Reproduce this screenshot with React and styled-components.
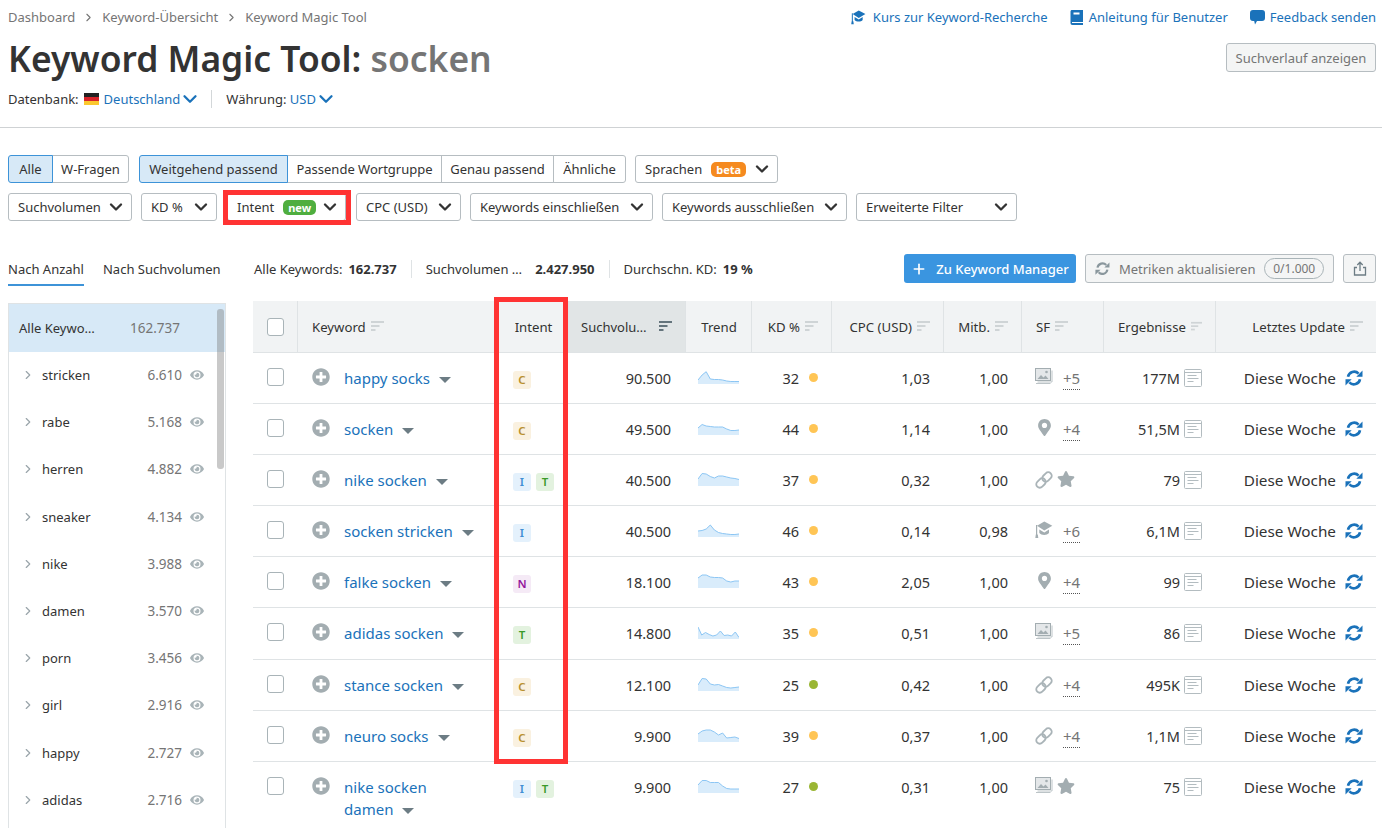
import React from 'react';
import styled, { createGlobalStyle } from 'styled-components';
import { FaMapMarkerAlt, FaStar, FaPlusCircle, FaEye } from 'react-icons/fa';
import { ChevronDown, ChevronRight, Plus } from 'lucide-react';

const GlobalStyle = createGlobalStyle`
  html, body { margin: 0; height: 100%; overflow: hidden; background: #fff; }
  body { font-family: "Noto Sans", "Open Sans", sans-serif; color: #333; font-size: 13px; }
  * { box-sizing: border-box; }
`;

const Page = styled.div`
  height: 828px;
  overflow: hidden;
`;

const Section = styled.div`
  padding: 0 6px 0 8px;
`;

const TopBar = styled.div`
  height: 34px;
  display: flex;
  align-items: center;
  justify-content: space-between;
`;

const Crumbs = styled.div`
  display: flex;
  align-items: center;
  gap: 7px;
  color: #757575;
  font-size: 13px;
`;

const HelpLinks = styled.div`
  display: flex;
  gap: 22px;
`;

const HelpLink = styled.a`
  display: flex;
  align-items: center;
  gap: ${(p) => p.$gap || 5}px;
  color: #1a72ba;
  font-size: 13px;
`;

const TitleRow = styled.div`
  display: flex;
  justify-content: space-between;
  height: 50px;
`;

const Title = styled.h1`
  margin: 0;
  font-size: 35.4px;
  line-height: 48px;
  font-weight: 600;
  color: #333;
  span { color: #757575; }
`;

const HistoryButton = styled.button`
  margin-top: 9px;
  width: 150px;
  height: 29px;
  background: #f4f5f5;
  border: 1px solid #b6bdc1;
  border-radius: 3px;
  color: #757575;
  font: inherit;
`;

const MetaRow = styled.div`
  margin-top: 5px;
  height: 20px;
  display: flex;
  align-items: center;
`;

const MetaLink = styled.span`
  display: inline-flex;
  align-items: center;
  color: #1a72ba;
  svg { margin: 0 -5px 0 -1px; }
`;

const Flag = styled.span`
  width: 15px;
  height: 12px;
  margin: 0 5px;
  background: linear-gradient(#222 33%, #d8232a 33% 66%, #fbc82e 66%);
`;

const MetaDivider = styled.span`
  width: 1px;
  height: 18px;
  background: #d3d7d9;
  margin: 0 14px 0 15px;
`;

const Rule = styled.hr`
  margin: 18px 0 0;
  border: 0;
  border-top: 1px solid #cfd2d4;
`;

const FilterArea = styled.div`
  margin-top: 27px;
  display: flex;
  flex-direction: column;
  gap: 10px;
`;

const FilterRow = styled.div`
  display: flex;
  gap: ${(p) => p.$gap || 9}px;
`;

const Segments = styled.div`
  display: flex;
`;

const Segment = styled.button`
  width: ${(p) => p.$w}px;
  height: 28px;
  padding: 0;
  font: inherit;
  color: #333;
  margin-left: -1px;
  background: ${(p) => (p.$active ? '#d7e9f7' : '#fff')};
  border: 1px solid ${(p) => (p.$active ? '#3d93d8' : '#b6bdc1')};
  position: relative;
  z-index: ${(p) => (p.$active ? 1 : 0)};
  &:first-child { margin-left: 0; border-radius: 3px 0 0 3px; }
  &:last-child { border-radius: 0 3px 3px 0; }
`;

const Select = styled.button`
  position: relative;
  width: ${(p) => p.$w}px;
  margin-left: ${(p) => p.$ml || 0}px;
  height: 28px;
  padding: 0 5px 0 9px;
  display: flex;
  align-items: center;
  justify-content: space-between;
  background: #fff;
  border: 1px solid #b6bdc1;
  border-radius: 3px;
  font: inherit;
  color: #333;
  white-space: nowrap;
`;

const SelectLabel = styled.span`
  display: flex;
  align-items: center;
  gap: 9px;
`;

const Pill = styled.span`
  height: 15px;
  padding: 0 5px;
  border-radius: 5px;
  background: ${(p) => p.$bg};
  color: #fff;
  font-size: 11px;
  font-weight: 700;
  line-height: 15px;
`;

const RedFrame = styled.span`
  position: absolute;
  top: -4px;
  bottom: -5px;
  left: -5px;
  right: -6px;
  border: 5px solid #ff3333;
  pointer-events: none;
`;

const Content = styled.div`
  margin-top: 33px;
  display: grid;
  grid-template-columns: 218px 1123px;
  column-gap: 27px;
`;

const Tabs = styled.div`
  display: flex;
  gap: 19px;
  height: 32px;
  margin-bottom: 17px;
  align-items: flex-start;
  padding-top: 5px;
`;

const Tab = styled.div`
  height: 27px;
  line-height: 20px;
  white-space: nowrap;
  border-bottom: 2px solid ${(p) => (p.$active ? '#3d93d8' : 'transparent')};
`;

const Sidebar = styled.div`
  position: relative;
  border: 1px solid #dfe3e5;
  border-bottom: 0;
  height: 525px;
  overflow: hidden;
`;

const SideActive = styled.div`
  height: 47.5px;
  background: #d7e9f7;
  display: flex;
  align-items: center;
  padding-left: 10px;
`;

const SideActiveLabel = styled.span`
  width: 111px;
`;

const SideCount = styled.span`
  color: #757575;
  font-size: 13.5px;
`;

const SideRow = styled.div`
  height: 47.2px;
  display: flex;
  align-items: center;
`;

const SideChevron = styled.span`
  width: 33px;
  padding-left: 12px;
  display: flex;
  color: #9aa5aa;
`;

const SideName = styled.span`
  flex: 1;
  color: #333;
`;

const SideEye = styled.span`
  width: 43px;
  display: flex;
  padding-left: 8px;
  color: #a9b4b8;
`;

const ScrollThumb = styled.div`
  position: absolute;
  top: 5px;
  right: 1px;
  width: 7px;
  height: 160px;
  border-radius: 3px;
  background: rgba(120, 120, 120, 0.4);
`;

const StatsBar = styled.div`
  height: 29px;
  margin-bottom: 18px;
  display: flex;
  align-items: center;
`;

const Stat = styled.span`
  display: flex;
  gap: ${(p) => p.$gap || 6}px;
  padding: 0 14px 0 ${(p) => (p.$first ? 1 : 14)}px;
  border-left: ${(p) => (p.$first ? '0' : '1px solid #dfe3e5')};
  line-height: 18px;
  b { font-weight: 700; }
`;

const StatActions = styled.div`
  margin-left: auto;
  display: flex;
  gap: 9px;
`;

const PrimaryButton = styled.button`
  width: 172px;
  height: 29px;
  display: flex;
  align-items: center;
  justify-content: center;
  gap: 9px;
  border: 0;
  border-radius: 3px;
  background: #3a95e0;
  color: #fff;
  font: inherit;
  font-weight: 500;
`;

const GhostButton = styled.button`
  width: ${(p) => p.$w}px;
  height: 29px;
  display: flex;
  align-items: center;
  justify-content: ${(p) => (p.$center ? 'center' : 'flex-start')};
  gap: 9px;
  padding: 0 ${(p) => (p.$center ? 0 : 9)}px;
  background: #f4f5f5;
  border: 1px solid #b6bdc1;
  border-radius: 3px;
  color: #757575;
  font: inherit;
  white-space: nowrap;
`;

const Quota = styled.span`
  margin-left: auto;
  width: 60px;
  height: 21px;
  border: 1px solid #a9b4b8;
  border-radius: 11px;
  font-size: 12px;
  line-height: 19px;
  text-align: center;
`;

const Table = styled.div`
  position: relative;
`;

const columns = '44px 200px 71px 117px 66px 80px 112px 78px 82px 112px 161px';

const HeadRow = styled.div`
  display: grid;
  grid-template-columns: ${columns};
  height: 52px;
  background: #f1f3f4;
  border-bottom: 1px solid #dfe3e5;
`;

const HeadCell = styled.div`
  display: flex;
  align-items: center;
  justify-content: ${(p) => (p.$sorted ? 'space-between' : p.$justify || 'flex-end')};
  gap: 5px;
  padding: 0 13px 0 ${(p) => (p.$sorted ? 12 : 14)}px;
  font-size: ${(p) => (p.$sorted ? 13 : 13.2)}px;
  white-space: nowrap;
  background: ${(p) => (p.$sorted ? '#e1e5e6' : 'transparent')};
  border-left: ${(p) => (p.$first ? '0' : '1px solid #dfe3e5')};
`;

const Row = styled.div`
  display: grid;
  grid-template-columns: ${columns};
  min-height: 51.1px;
  border-bottom: 1px solid #dfe3e5;
  &:last-child { border-bottom: 0; }
`;

const Cell = styled.div`
  display: flex;
  align-items: flex-start;
  justify-content: ${(p) => p.$justify || 'flex-end'};
  gap: ${(p) => p.$gap || 0}px;
  padding: ${(p) => p.$top || 14}px ${(p) => (p.$right === undefined ? 13 : p.$right)}px 0 ${(p) => p.$left || 0}px;
  font-size: 14.5px;
  line-height: 22px;
  white-space: nowrap;
`;

const UpdateText = styled.span`
  font-size: 15.3px;
`;

const Checkbox = styled.span`
  display: block;
  width: 18px;
  height: 18px;
  background: #fff;
  border: 1px solid #a9b4b8;
  border-radius: 3px;
`;

const KeywordText = styled.a`
  max-width: 135px;
  color: #1a72ba;
  font-size: 15px;
  white-space: normal;
`;

const LastWord = styled.span`
  white-space: nowrap;
`;

const Caret = styled.i`
  display: inline-block;
  margin-left: 9px;
  vertical-align: 1px;
  border-left: 6px solid transparent;
  border-right: 6px solid transparent;
  border-top: 6px solid #6c7c84;
`;

const PlusHolder = styled.span`
  display: flex;
  color: #a3adb1;
  margin: 1px 14px 0 0;
`;

const Badges = styled.div`
  display: flex;
  gap: 5px;
  padding-top: 4px;
`;

const intentColors = {
  C: ['#faf1e0', '#b8902f'],
  I: ['#e4f1fc', '#3f8fd4'],
  T: ['#e3f2df', '#3a9a2a'],
  N: ['#f5eaf6', '#94169c'],
};

const Badge = styled.span`
  width: 18px;
  height: 18px;
  border-radius: 3px;
  text-align: center;
  font-size: 11.5px;
  font-weight: 600;
  line-height: 18px;
  background: ${(p) => intentColors[p.$kind][0]};
  color: ${(p) => intentColors[p.$kind][1]};
`;

const Dot = styled.span`
  width: 9px;
  height: 9px;
  margin: 6px 0 0 10px;
  border-radius: 50%;
  background: ${(p) => p.$color};
`;

const More = styled.span`
  margin-left: 10px;
  height: 22px;
  line-height: 21px;
  border-bottom: 1px dotted #555;
  color: #757575;
  font-size: 15px;
`;

const SfIcon = styled.span`
  display: flex;
  width: 18px;
  justify-content: center;
  margin-left: ${(p) => p.$ml || 0}px;
  margin-top: ${(p) => p.$mt || 0}px;
  color: #a3adb1;
`;

const RefreshHolder = styled.span`
  display: flex;
  margin-top: 3px;
`;

const RedColumn = styled.div`
  position: absolute;
  left: 241px;
  top: -4px;
  width: 74px;
  height: 467px;
  border: 5px solid #ff3333;
  pointer-events: none;
`;

const DocIcon = () => (
  <svg width="18" height="18" viewBox="0 0 18 18" fill="none" stroke="#b3bcc0">
    <rect x="0.5" y="0.5" width="17" height="17" rx="1" />
    <path d="M1 3.5h16" />
    <path d="M3.5 6.5h9M3.5 9.5h11M3.5 12.5h6" strokeWidth="1.2" />
  </svg>
);

const ImagesIcon = () => (
  <svg width="18" height="16" viewBox="0 0 18 16">
    <rect x="0.5" y="0.5" width="15" height="12" fill="#e4e7e9" stroke="#a3adb1" />
    <path d="M2.5 11l3.5-4 2.5 2.500 2-2 3 3.500z" fill="#a3adb1" />
    <circle cx="11.5" cy="4" r="1.3" fill="#a3adb1" />
    <path d="M17 2.500v11.500H2.500M15.500 15.500H1" fill="none" stroke="#bcc4c7" />
  </svg>
);

const ChainIcon = () => (
  <svg width="20" height="20" viewBox="1 1 18 18" fill="none" stroke="#aab4b8" strokeWidth="1.8">
    <g transform="rotate(-45 10 10)">
      <rect x="0.500" y="6.500" width="10.500" height="7" rx="3.500" />
      <rect x="9" y="6.500" width="10.500" height="7" rx="3.500" />
    </g>
  </svg>
);

const CapIcon = ({ color = '#a3adb1', size = 18 }) => (
  <svg width={size} height={size} viewBox="0 0 18 17" fill={color}>
    <path d="M2 4.300L9.300 0l8 4.300-8 4.700z" />
    <path d="M4.300 8l5 3 4.700-3v3.500c-2 2.500-7.500 2.500-9.700 0z" />
    <path d="M1 3.500h1.200V13h.6l.5 3.500H.3L.8 13H1z" />
  </svg>
);

const BookIcon = () => (
  <svg width="14" height="15" viewBox="0 0 14 15">
    <path d="M2 0h11v15H2.500C1 15 .5 14 .5 13V1.500C.5.600 1 0 2 0z" fill="#1a72ba" />
    <rect x="3.500" y="2.500" width="6" height="2" fill="#fff" />
    <path d="M2 12.500h11" stroke="#fff" />
  </svg>
);

const BubbleIcon = () => (
  <svg width="15" height="15" viewBox="0 0 15 15">
    <path d="M3 0h9a3 3 0 0 1 3 3v5a3 3 0 0 1-3 3H7l-2 3.500-.8-3.500H3a3 3 0 0 1-3-3V3a3 3 0 0 1 3-3z" fill="#1a72ba" />
  </svg>
);

const ShareIcon = () => (
  <svg width="14" height="15" viewBox="0 0 14 15" fill="none" stroke="#6c7c84" strokeWidth="1.300">
    <path d="M7 10V1.500M4.300 4L7 1.200 9.700 4" />
    <path d="M4 6.500H1.500v7.500h11V6.500H10" />
  </svg>
);

const RefreshIcon = ({ color, width = 18 }) => (
  <svg width={width} height={(width * 16) / 18} viewBox="0 0 18 16">
    <path d="M3 6.800A6.200 6.200 0 0 1 13.600 3.600M15 9.200A6.200 6.200 0 0 1 4.400 12.400" fill="none" stroke={color} strokeWidth="2.600" />
    <path d="M17.500 0.500v6.200h-6.200zM.5 15.500V9.300h6.200z" fill={color} />
  </svg>
);

const SortIcon = ({ dark }) => (
  <svg width="13" height="12" viewBox="0 0 13 12" fill={dark ? '#64747c' : '#cfd4d6'}>
    <rect width="13" height="2" />
    <rect y="4" width="8.500" height="2" />
    <rect y="8" width="4.500" height="2" />
  </svg>
);

const Spark = ({ values }) => {
  const step = 41 / (values.length - 1);
  const pts = values.map((v, i) => `${(i * step).toFixed(1)} ${(14 - v).toFixed(1)}`);
  return (
    <svg width="41" height="14" viewBox="0 0 41 14">
      <path d={`M0 14L${pts.join('L')}L41 14Z`} fill="#d9ecfb" />
      <path d={`M${pts.join('L')}`} fill="none" stroke="#8cc6f4" strokeWidth="1" />
    </svg>
  );
};

const sfIcons = {
  img: <ImagesIcon />,
  pin: <FaMapMarkerAlt size={17} />,
  link: <ChainIcon />,
  cap: <CapIcon />,
  star: <FaStar size={18} />,
};

const rows = [
  { kw: 'happy socks', intent: ['C'], vol: '90.500', spark: [4, 9, 12.3, 5, 4.5, 4.5, 4, 3, 2.5, 2.5, 2.5], kd: 32, cpc: '1,03', com: '1,00', sf: 'img', more: '+5', res: '177M' },
  { kw: 'socken', intent: ['C'], vol: '49.500', spark: [7, 10.5, 9, 8.5, 8, 8, 8, 6, 4.5, 4.5, 5], kd: 44, cpc: '1,14', com: '1,00', sf: 'pin', more: '+4', res: '51,5M' },
  { kw: 'nike socken', intent: ['I', 'T'], vol: '40.500', spark: [7, 12.5, 12, 9.5, 8, 10, 10, 9, 8, 7.5, 6.5], kd: 37, cpc: '0,32', com: '1,00', sf: 'link', star: true, res: '79' },
  { kw: 'socken stricken', intent: ['I'], vol: '40.500', spark: [6, 6.5, 8, 12, 7, 4.5, 3.5, 3, 2.5, 2.5, 3], kd: 46, cpc: '0,14', com: '0,98', sf: 'cap', more: '+6', res: '6,1M' },
  { kw: 'falke socken', intent: ['N'], vol: '18.100', spark: [10, 13, 13, 11, 10.5, 10.5, 10, 7, 6, 7, 7], kd: 43, cpc: '2,05', com: '1,00', sf: 'pin', more: '+4', res: '99' },
  { kw: 'adidas socken', intent: ['T'], vol: '14.800', spark: [12, 4, 6.5, 4.5, 3, 4, 8, 3.5, 4, 3, 7, 1.5], kd: 35, cpc: '0,51', com: '1,00', sf: 'img', more: '+5', res: '86' },
  { kw: 'stance socken', intent: ['C'], vol: '12.100', spark: [6, 12.5, 12, 7, 6, 6.5, 5, 3.5, 3, 3.5, 4], kd: 25, green: true, cpc: '0,42', com: '1,00', sf: 'link', more: '+4', res: '495K' },
  { kw: 'neuro socks', intent: ['C'], vol: '9.900', spark: [8, 11, 12, 12, 10, 7, 9, 4, 4.5, 5, 3.5], kd: 39, cpc: '0,37', com: '1,00', sf: 'link', more: '+4', res: '1,1M' },
  { kw: 'nike socken damen', intent: ['I', 'T'], vol: '9.900', spark: [8, 12.5, 12.5, 10.5, 10.5, 10.5, 7, 4.5, 4, 4, 4], kd: 27, green: true, cpc: '0,31', com: '1,00', sf: 'img', star: true, res: '75' },
];

const groups = [
  ['stricken', '6.610'], ['rabe', '5.168'], ['herren', '4.882'], ['sneaker', '4.134'], ['nike', '3.988'],
  ['damen', '3.570'], ['porn', '3.456'], ['girl', '2.916'], ['happy', '2.727'], ['adidas', '2.716'],
];

const heads = [
  ['Keyword', 'flex-start'], ['Intent', 'center'], ['Suchvolu…', 'flex-end'], ['Trend', 'center'], ['KD %'], ['CPC (USD)'],
  ['Mitb.'], ['SF', 'flex-start'], ['Ergebnisse'], ['Letztes Update'],
];

const Chevron = () => <ChevronDown size={20} strokeWidth={2.8} />;

function KeywordLabel({ text }) {
  const words = text.split(' ');
  const last = words.pop();
  return (
    <KeywordText>
      {words.length > 0 && words.join(' ') + ' '}
      <LastWord>{last}<Caret /></LastWord>
    </KeywordText>
  );
}

function App() {
  return (
    <Page>
      <GlobalStyle />
      <Section>
        <TopBar>
          <Crumbs>
            Dashboard <ChevronRight size={13} strokeWidth={2} color="#757575" />
            Keyword-Übersicht <ChevronRight size={13} strokeWidth={2} color="#757575" />
            Keyword Magic Tool
          </Crumbs>
          <HelpLinks>
            <HelpLink $gap={7}><CapIcon color="#1a72ba" size={15} />Kurs zur Keyword-Recherche</HelpLink>
            <HelpLink><BookIcon />Anleitung für Benutzer</HelpLink>
            <HelpLink><BubbleIcon />Feedback senden</HelpLink>
          </HelpLinks>
        </TopBar>
        <TitleRow>
          <Title>Keyword Magic Tool: <span>socken</span></Title>
          <HistoryButton>Suchverlauf anzeigen</HistoryButton>
        </TitleRow>
        <MetaRow>
          Datenbank:<Flag />
          <MetaLink>Deutschland <ChevronDown size={22} strokeWidth={2.5} /></MetaLink>
          <MetaDivider />
          Währung:&nbsp;
          <MetaLink>USD <ChevronDown size={22} strokeWidth={2.5} /></MetaLink>
        </MetaRow>
      </Section>
      <Rule />
      <Section>
        <FilterArea>
          <FilterRow $gap={10}>
            <Segments>
              <Segment $active $w={45}>Alle</Segment>
              <Segment $w={77}>W-Fragen</Segment>
            </Segments>
            <Segments>
              <Segment $active $w={149}>Weitgehend passend</Segment>
              <Segment $w={155}>Passende Wortgruppe</Segment>
              <Segment $w={113}>Genau passend</Segment>
              <Segment $w={73}>Ähnliche</Segment>
            </Segments>
            <Select $w={143} $ml={-1}>
              <SelectLabel>Sprachen <Pill $bg="#f58a1f">beta</Pill></SelectLabel>
              <Chevron />
            </Select>
          </FilterRow>
          <FilterRow>
            <Select $w={124}>Suchvolumen <Chevron /></Select>
            <Select $w={76}>KD % <Chevron /></Select>
            <Select $w={119} $ml={1}>
              <SelectLabel>Intent <Pill $bg="#4fae3f">new</Pill></SelectLabel>
              <Chevron />
              <RedFrame />
            </Select>
            <Select $w={105} $ml={1}>CPC (USD) <Chevron /></Select>
            <Select $w={183}>Keywords einschließen <Chevron /></Select>
            <Select $w={185}>Keywords ausschließen <Chevron /></Select>
            <Select $w={161}>Erweiterte Filter <Chevron /></Select>
          </FilterRow>
        </FilterArea>
        <Content>
          <div>
            <Tabs>
              <Tab $active>Nach Anzahl</Tab>
              <Tab>Nach Suchvolumen</Tab>
            </Tabs>
            <Sidebar>
              <SideActive>
                <SideActiveLabel>Alle Keywo…</SideActiveLabel>
                <SideCount>162.737</SideCount>
              </SideActive>
              {groups.map(([name, count]) => (
                <SideRow key={name}>
                  <SideChevron><ChevronRight size={14} strokeWidth={2} /></SideChevron>
                  <SideName>{name}</SideName>
                  <SideCount>{count}</SideCount>
                  <SideEye><FaEye size={14} /></SideEye>
                </SideRow>
              ))}
              <ScrollThumb />
            </Sidebar>
          </div>
          <div>
            <StatsBar>
              <Stat $first>Alle Keywords: <b>162.737</b></Stat>
              <Stat $gap={13}>Suchvolumen … <b>2.427.950</b></Stat>
              <Stat>Durchschn. KD: <b>19 %</b></Stat>
              <StatActions>
                <PrimaryButton><Plus size={16} strokeWidth={2.5} />Zu Keyword Manager</PrimaryButton>
                <GhostButton $w={249}>
                  <RefreshIcon color="#8a979d" width={15} />
                  Metriken aktualisieren
                  <Quota>0/1.000</Quota>
                </GhostButton>
                <GhostButton $w={33} $center><ShareIcon /></GhostButton>
              </StatActions>
            </StatsBar>
            <Table>
              <RedColumn />
              <HeadRow>
                <HeadCell $first $justify="flex-start"><Checkbox /></HeadCell>
                {heads.map(([label, justify]) => (
                  <HeadCell key={label} $justify={justify} $sorted={label === 'Suchvolu…'}>
                    {label}
                    {label !== 'Intent' && label !== 'Trend' && <SortIcon dark={label === 'Suchvolu…'} />}
                  </HeadCell>
                ))}
              </HeadRow>
              {rows.map((r) => (
                <Row key={r.kw}>
                  <Cell $justify="flex-start" $left={14} $top={15}><Checkbox /></Cell>
                  <Cell $justify="flex-start" $left={15} $right={0}>
                    <PlusHolder><FaPlusCircle size={18} /></PlusHolder>
                    <KeywordLabel text={r.kw} />
                  </Cell>
                  <Cell $justify="flex-start" $left={16} $right={0}>
                    <Badges>{r.intent.map((k) => <Badge key={k} $kind={k}>{k}</Badge>)}</Badges>
                  </Cell>
                  <Cell $right={14}>{r.vol}</Cell>
                  <Cell $justify="center" $right={0} $top={17}><Spark values={r.spark} /></Cell>
                  <Cell $right={13}>{r.kd}<Dot $color={r.green ? '#9ab634' : '#ffc555'} /></Cell>
                  <Cell>{r.cpc}</Cell>
                  <Cell>{r.com}</Cell>
                  <Cell $justify="flex-start" $left={14} $right={0} $top={15}>
                    <SfIcon>{sfIcons[r.sf]}</SfIcon>
                    {r.star && <SfIcon $ml={4}>{sfIcons.star}</SfIcon>}
                    {r.more && <More>{r.more}</More>}
                  </Cell>
                  <Cell $gap={4} $top={14}>{r.res}<SfIcon $mt={2}><DocIcon /></SfIcon></Cell>
                  <Cell $gap={9}>
                    <UpdateText>Diese Woche</UpdateText>
                    <RefreshHolder><RefreshIcon color="#1a72ba" /></RefreshHolder>
                  </Cell>
                </Row>
              ))}
            </Table>
          </div>
        </Content>
      </Section>
    </Page>
  );
}

export default App;
